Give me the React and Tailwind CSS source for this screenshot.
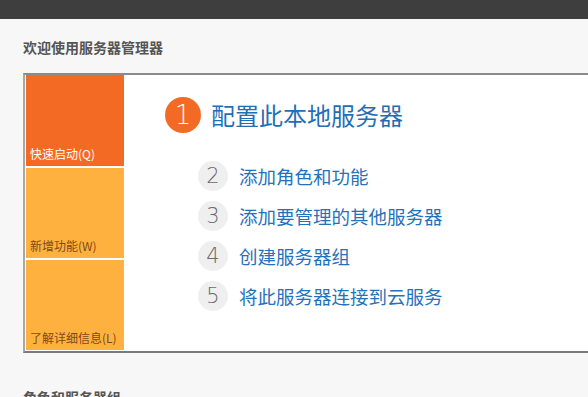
import React from 'react';

const steps = [
  { n: '2', label: '添加角色和功能' },
  { n: '3', label: '添加要管理的其他服务器' },
  { n: '4', label: '创建服务器组' },
  { n: '5', label: '将此服务器连接到云服务' },
];

const App = () => {
  return (
    <div className="w-[588px] h-[397px] overflow-hidden bg-[#f7f7f7] font-['Noto_Sans_CJK_SC',sans-serif]">
      {/* Top bar */}
      <div className="h-[19px] bg-[#3e3e3e]"></div>

      <div className="pl-[23px] pt-[18px]">
        <h2 className="text-[14px] leading-[20px] font-bold text-[#555555]">欢迎使用服务器管理器</h2>

        {/* Quick start panel */}
        <div className="mt-[16px] w-[620px] h-[280px] flex bg-white border-t-2 border-b-2 border-l-2 border-t-[#8a8a8a] border-b-[#7a7a7a] border-l-[#a8a8a8] pl-[1px]">
          <div className="w-[98px] flex flex-col gap-[2px] pb-[1px]">
            <div className="h-[91px] bg-[#f36a25] flex items-end px-[4px] pb-[4px]">
              <span className="text-[12px] leading-[16px] text-white">快速启动(Q)</span>
            </div>
            <div className="h-[90px] bg-[#ffb13f] flex items-end px-[4px] pb-[4px]">
              <span className="text-[12px] leading-[16px] text-[#7e4a14]">新增功能(W)</span>
            </div>
            <div className="h-[90px] bg-[#ffb13f] flex items-end px-[4px] pb-[4px]">
              <span className="text-[12px] leading-[16px] text-[#7e4a14]">了解详细信息(L)</span>
            </div>
          </div>

          <div className="flex-1 pl-[41px] pt-[22px]">
            <div className="flex items-center gap-[10px]">
              <div className="w-[36px] h-[36px] rounded-full bg-[#f36a25] flex items-center justify-center text-white text-[26px] font-extralight leading-none font-['DejaVu_Sans',sans-serif]">1</div>
              <span className="text-[24px] leading-[36px] text-[#1f6fb6]">配置此本地服务器</span>
            </div>

            <div className="mt-[28px] pl-[33px] flex flex-col gap-[10px]">
              {steps.map((s) => (
                <div key={s.n} className="flex items-center gap-[11px] h-[30px]">
                  <div className="w-[30px] h-[30px] rounded-full bg-[#efefef] flex items-center justify-center text-[#6a6a6a] text-[21px] font-extralight leading-none font-['DejaVu_Sans',sans-serif]">{s.n}</div>
                  <span className="text-[18.5px] leading-[30px] text-[#1f72bb]">{s.label}</span>
                </div>
              ))}
            </div>
          </div>
        </div>

        <h2 className="mt-[34px] text-[14px] leading-[20px] font-bold text-[#555555]">角色和服务器组</h2>
      </div>
    </div>
  );
};

export default App;
